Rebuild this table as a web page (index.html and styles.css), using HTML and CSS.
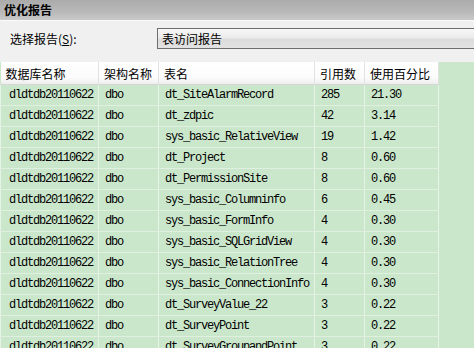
FILE: index.html
```html
<!DOCTYPE html>
<html lang="zh-CN">
<head>
<meta charset="utf-8">
<link rel="stylesheet" href="styles.css">
</head>
<body>
<div class="app">
  <div class="title">优化报告</div>
  <div class="panel">
    <span class="label">选择报告(<u>S</u>):</span>
    <div class="select">表访问报告</div>
  </div>
  <div class="grid">
    <table class="tbl">
      <colgroup>
        <col class="c1"><col class="c2"><col class="c3"><col class="c4"><col class="c5">
      </colgroup>
      <thead>
        <tr><th>数据库名称</th><th>架构名称</th><th>表名</th><th>引用数</th><th>使用百分比</th></tr>
      </thead>
      <tbody>
        <tr><td>dldtdb20110622</td><td>dbo</td><td>dt_SiteAlarmRecord</td><td>285</td><td>21.30</td></tr>
        <tr><td>dldtdb20110622</td><td>dbo</td><td>dt_zdpic</td><td>42</td><td>3.14</td></tr>
        <tr><td>dldtdb20110622</td><td>dbo</td><td>sys_basic_RelativeView</td><td>19</td><td>1.42</td></tr>
        <tr><td>dldtdb20110622</td><td>dbo</td><td>dt_Project</td><td>8</td><td>0.60</td></tr>
        <tr><td>dldtdb20110622</td><td>dbo</td><td>dt_PermissionSite</td><td>8</td><td>0.60</td></tr>
        <tr><td>dldtdb20110622</td><td>dbo</td><td>sys_basic_Columninfo</td><td>6</td><td>0.45</td></tr>
        <tr><td>dldtdb20110622</td><td>dbo</td><td>sys_basic_FormInfo</td><td>4</td><td>0.30</td></tr>
        <tr><td>dldtdb20110622</td><td>dbo</td><td>sys_basic_SQLGridView</td><td>4</td><td>0.30</td></tr>
        <tr><td>dldtdb20110622</td><td>dbo</td><td>sys_basic_RelationTree</td><td>4</td><td>0.30</td></tr>
        <tr><td>dldtdb20110622</td><td>dbo</td><td>sys_basic_ConnectionInfo</td><td>4</td><td>0.30</td></tr>
        <tr><td>dldtdb20110622</td><td>dbo</td><td>dt_SurveyValue_22</td><td>3</td><td>0.22</td></tr>
        <tr><td>dldtdb20110622</td><td>dbo</td><td>dt_SurveyPoint</td><td>3</td><td>0.22</td></tr>
        <tr><td>dldtdb20110622</td><td>dbo</td><td>dt_SurveyGroupandPoint</td><td>3</td><td>0.22</td></tr>
      </tbody>
    </table>
  </div>
</div>
</body>
</html>
```
FILE: styles.css
```css
html, body {
  margin: 0;
  padding: 0;
  background: #f0f0f0;
}
.app {
  width: 474px;
  height: 348px;
  overflow: hidden;
  font-family: "Noto Sans CJK SC", "Liberation Sans", sans-serif;
  font-size: 12px;
  color: #000;
}
.title {
  height: 20px;
  line-height: 20px;
  padding-left: 4px;
  font-weight: bold;
  background: linear-gradient(to bottom, #ababab 0%, #b9b9b9 60%, #c9c9c9 100%);
  border-bottom: 1px solid #fafafa;
}
.panel {
  height: 41px;
  display: flex;
  align-items: flex-start;
  background: #f0f0f0;
  box-sizing: border-box;
  padding-top: 7px;
}
.label {
  width: 147px;
  padding-left: 10px;
  line-height: 21px;
}
.label u {
  text-decoration: underline;
}
.select {
  flex: 1;
  height: 19px;
  line-height: 19px;
  padding-left: 4px;
  border: 1px solid #6e6e6e;
  border-right: none;
  background: linear-gradient(to bottom, #f6f6f6 0%, #ececec 45%, #dcdcdc 55%, #e2e2e2 100%);
}
.grid {
  height: 286px;
  background: #cbe7cb;
  overflow: hidden;
}
.tbl {
  border-collapse: collapse;
  table-layout: fixed;
  width: 438px;
}
.c1 { width: 98px; }
.c2 { width: 60px; }
.c3 { width: 156px; }
.c4 { width: 50px; }
.c5 { width: 74px; }
.tbl th {
  height: 21px;
  padding: 1px 0 0 5px;
  text-align: left;
  font-weight: normal;
  white-space: nowrap;
  background: linear-gradient(to bottom, #ffffff 0%, #fbfbfb 70%, #eeeeee 100%);
  border-right: 1px solid #e2e2e2;
  border-bottom: 1px solid #d6d6d6;
  overflow: hidden;
}
.tbl td {
  padding: 1px 0 0 6px;
  line-height: 19px;
  font-family: "Liberation Mono", "DejaVu Sans Mono", monospace;
  font-size: 12px;
  letter-spacing: -1.2px;
  white-space: nowrap;
  overflow: hidden;
  background: #cbe7cb;
  border-right: 1px solid #e6f3e6;
  border-bottom: 1px solid #e0f0e0;
}
.tbl td:first-child {
  padding-left: 8px;
  border-left: 1px solid #e6f3e6;
}
.tbl th:first-child {
  padding-left: 5px;
}
```
